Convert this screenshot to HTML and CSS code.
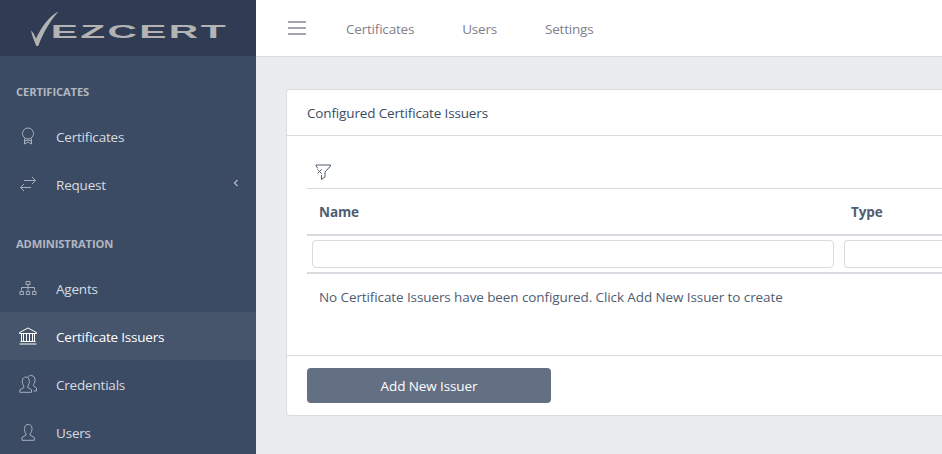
FILE: index.html
```html
<!DOCTYPE html>
<html lang="en">
<head>
<meta charset="utf-8">
<title>EZCERT</title>
<link rel="stylesheet" href="styles.css">
</head>
<body>
<aside class="sidebar">
  <div class="brand">
    <svg width="256" height="56" viewBox="0 0 256 56" fill="#b3b3b3">
      <path d="M31 30.500C33 32 34.500 35 36 38.500C42 26 49 16.500 58.500 11.500C50 21 43 33 38.500 45.500Q37 46.500 36 45.500C34 40 32 36 31 30.500Z"/>
      <text class="brand-text" transform="translate(50.800 38) scale(2.330 1)" x="0" y="0" textLength="75" lengthAdjust="spacing">EZCERT</text>
    </svg>
  </div>
  <nav>
    <h2 class="nav-title">CERTIFICATES</h2>
    <a class="nav-item">
      <svg class="icon" viewBox="0 0 20 20"><circle cx="10" cy="7.500" r="5.500"/><path d="M6.500 12.500v5.500l3.500-2 3.500 2v-5.500M6.500 15l3.500-1 3.500 1"/></svg>
      <span class="label">Certificates</span>
    </a>
    <a class="nav-item">
      <svg class="icon" viewBox="0 0 20 20"><path d="M6 6.500h11.500M14 3L17.500 6.500 14 10M13 13.500H2.500M6 10L2.500 13.500 6 17"/></svg>
      <span class="label">Request</span>
      <svg class="chevron" viewBox="0 0 6 8"><path d="M4.500 1L1.500 4l3 3"/></svg>
    </a>
    <h2 class="nav-title">ADMINISTRATION</h2>
    <a class="nav-item">
      <svg class="icon" viewBox="0 0 20 20"><path d="M8 3.500h4v3H8zM10 6.500v6M3.500 12.500v-3h13v3M2 13.500h3.500v3H2zM8.300 13.500h3.400v3H8.300zM14.500 13.500H18v3h-3.500z"/></svg>
      <span class="label">Agents</span>
    </a>
    <a class="nav-item active">
      <svg class="icon" viewBox="0 0 20 20"><path d="M1.500 6.500L10 2l8.500 4.500v1h-17zM3.500 8v7M5.500 8v7M8.500 8v7M11.500 8v7M14.500 8v7M16.500 8v7M2.500 15.500h15M1.500 18h17"/></svg>
      <span class="label">Certificate Issuers</span>
    </a>
    <a class="nav-item">
      <svg class="icon" viewBox="0 0 20 20"><path d="M1.800 18.300V15.800l4-2.300v-1.500C4.300 10 4.300 8 4.300 7c0-5.300 7-5.300 7 0 0 2-.3 3.500-1.500 5v1.500l3.700 2.300v2.500zM10 3c1-2.500 7-2 7 2.500 0 2-.5 3.500-1.500 5v1.500l3 2v3h-3"/></svg>
      <span class="label">Credentials</span>
    </a>
    <a class="nav-item">
      <svg class="icon" viewBox="0 0 20 20"><path d="M4 18.300V15.500l4-2.500v-1C6.500 10 6.500 7.500 6.500 6.500c0-5.500 7.500-5.500 7.500 0 0 2-.5 4-2 5.500v1l4.300 2.500v2.800z"/></svg>
      <span class="label">Users</span>
    </a>
  </nav>
</aside>
<div class="page">
  <header class="topbar">
    <svg class="burger" viewBox="0 0 18 14"><path d="M0 1h18M0 7h18M0 13h18"/></svg>
    <a class="top-link">Certificates</a>
    <a class="top-link">Users</a>
    <a class="top-link">Settings</a>
  </header>
  <main class="content">
    <section class="card">
      <div class="card-header"><span>Configured Certificate Issuers</span></div>
      <div class="card-body">
        <div class="tools">
          <svg class="filter" viewBox="0 0 16 16"><path d="M1 1h14.500v1L10 8v5l-3.500 2.500V11M1 1v1l2 2.500M2.500 5.500l4 4M6.500 5.500l-4 4"/></svg>
        </div>
        <div class="grid-row titles"><b>Name</b><b>Type</b></div>
        <div class="grid-row filters"><input aria-label="Name"><input class="last" aria-label="Type"></div>
        <p class="empty">No Certificate Issuers have been configured. Click Add New Issuer to create</p>
      </div>
      <div class="card-footer"><button class="add">Add New Issuer</button></div>
    </section>
  </main>
</div>
</body>
</html>
```
FILE: styles.css
```css
* { box-sizing: border-box; }
body {
  margin: 0;
  height: 454px;
  display: flex;
  overflow: hidden;
  background: #ebecee;
  color: #4f5d73;
  font: 13.5px/20px "Open Sans", "Noto Sans", sans-serif;
  letter-spacing: -0.1px;
}
svg { flex: none; display: block; }
.sidebar { width: 256px; flex: none; background: #3c4b64; overflow: hidden; }
.brand { height: 56px; background: #303c54; }
.brand-text { font: bold 17.5px "Liberation Sans", sans-serif; letter-spacing: 0; }
.nav-title {
  height: 56px;
  margin: 0;
  padding: 26px 16px 0;
  color: #b1b7c1;
  font-size: 11.2px;
  line-height: 20px;
  font-weight: 700;
  letter-spacing: -0.12px;
}
.nav-item { height: 48px; display: flex; align-items: center; padding: 2px 16px 0 18px; color: #d8dbe0; }
.nav-item.active { background: #46546c; color: #fff; }
.label { letter-spacing: -0.2px; }
.icon { width: 20px; height: 20px; margin: -2px 18px 0 0; fill: none; stroke: #a7afbb; stroke-width: 1; }
.active .icon { stroke: #fff; }
.chevron { width: 6px; height: 8px; margin: -4px 1px 0 auto; fill: none; stroke: #b0b7c3; stroke-width: 1.300; }
.page { flex: 1; min-width: 0; }
.topbar {
  height: 57px;
  display: flex;
  align-items: center;
  padding: 2px 0 0 32px;
  background: #fff;
  border-bottom: 1px solid #d8dbe0;
  color: #7f7f8b;
  letter-spacing: -0.2px;
}
.burger { width: 18px; height: 14px; margin: -2px 40px 0 0; stroke: #8a8996; stroke-width: 1.500; }
.top-link { margin-right: 48px; }
.content { padding: 32px 0 0 30px; }
.card { border: 1px solid #d8dbe0; border-right: 0; border-radius: 4px 0 0 4px; background: #fff; }
.card-header { height: 46px; padding: 13px 20px; border-bottom: 1px solid #d8dbe0; color: #3c4b64; letter-spacing: -0.15px; }
.card-body { height: 219px; padding: 20px 0 20px 20px; }
.tools { height: 32px; padding: 8px; }
.filter { width: 16px; height: 16px; fill: none; stroke: #4f5d73; stroke-width: 1; }
.grid-row { display: grid; grid-template-columns: 532px 1fr; }
.titles { height: 48px; padding-top: 13px; border-top: 1px solid #d8dbe0; border-bottom: 2px solid #d8dbe0; }
.titles b { padding-left: 12px; }
.filters { height: 38px; border-bottom: 2px solid #d8dbe0; }
.filters input { min-width: 0; height: 28px; margin: 4px 5px; border: 1px solid #d8dbe0; border-radius: 4px; background: #fff; }
.filters .last { margin-right: 0; border-right: 0; border-radius: 4px 0 0 4px; }
.empty { margin: 13px 0 0 12px; white-space: nowrap; }
.card-footer { height: 60px; padding: 12px 20px; border-top: 1px solid #d8dbe0; }
.add {
  width: 244px;
  height: 35px;
  display: block;
  padding: 1px 0 0;
  border: 0;
  border-radius: 4px;
  background: #636f83;
  color: #fff;
  font: inherit;
  letter-spacing: inherit;
}
```
